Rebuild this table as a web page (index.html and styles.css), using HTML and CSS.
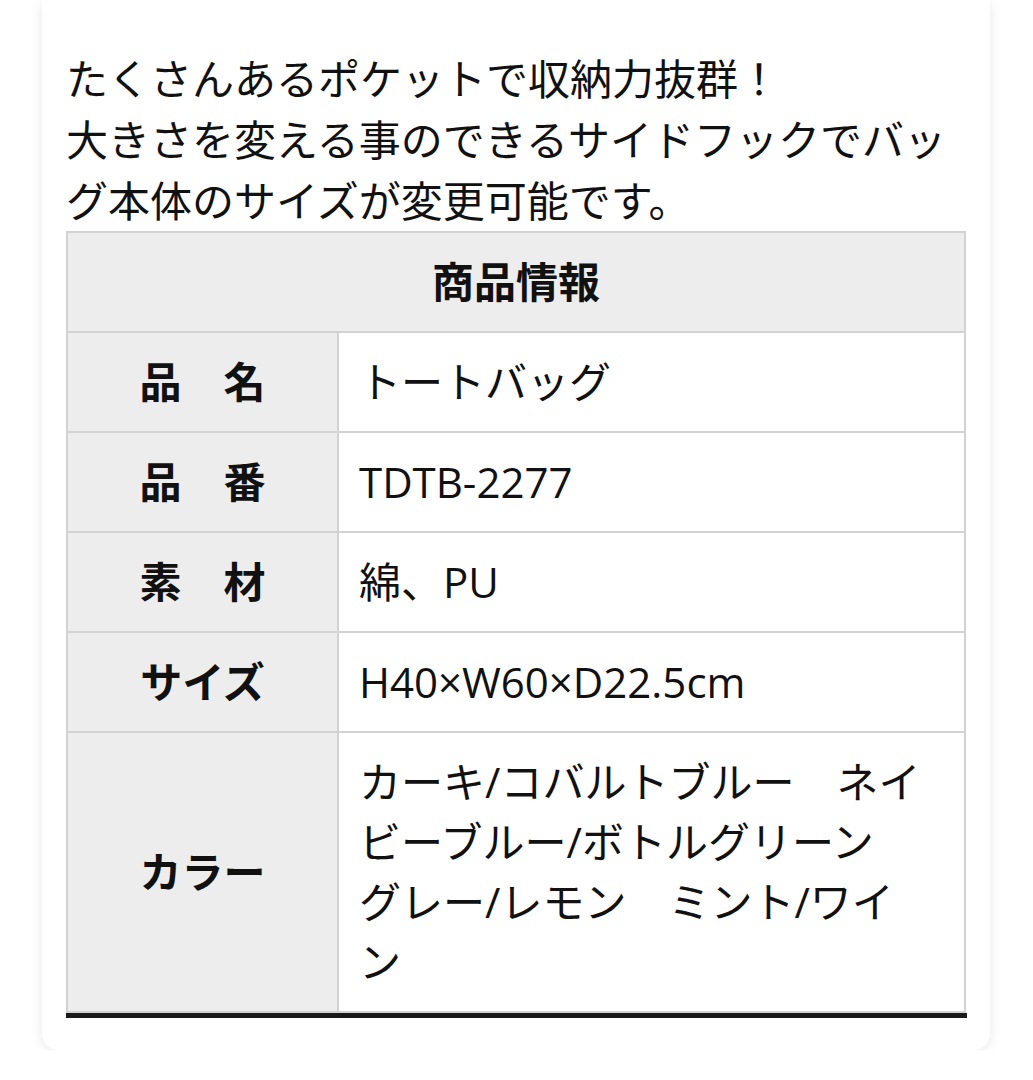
FILE: index.html
```html
<!DOCTYPE html>
<html lang="ja">
<head>
    <meta charset="UTF-8">
    <meta name="viewport" content="width=device-width, initial-scale=1.0">
    <title>トートバッグ 商品情報</title>
    <link rel="stylesheet" href="styles.css">
</head>
<body>
    <div class="card">
        <p class="lead">たくさんあるポケットで収納力抜群！<br>大きさを変える事のできるサイドフックでバッグ本体のサイズが変更可能です。</p>
        <table class="spec">
            <colgroup>
                <col class="col-label">
                <col class="col-value">
            </colgroup>
            <thead>
                <tr>
                    <th colspan="2">商品情報</th>
                </tr>
            </thead>
            <tbody>
                <tr>
                    <td class="label">品　名</td>
                    <td>トートバッグ</td>
                </tr>
                <tr>
                    <td class="label">品　番</td>
                    <td>TDTB-2277</td>
                </tr>
                <tr>
                    <td class="label">素　材</td>
                    <td>綿、PU</td>
                </tr>
                <tr>
                    <td class="label">サイズ</td>
                    <td>H40×W60×D22.5cm</td>
                </tr>
                <tr>
                    <td class="label">カラー</td>
                    <td>カーキ/コバルトブルー　ネイビーブルー/ボトルグリーン　グレー/レモン　ミント/ワイン</td>
                </tr>
            </tbody>
        </table>
        <div class="rule"></div>
    </div>
</body>
</html>
```

FILE: styles.css
```css
body {
    font-family: "Open Sans", "Noto Sans CJK JP", sans-serif;
    background-color: #fff;
    color: #111;
    margin: 0;
    padding: 0;
}
.card {
    width: 900px;
    margin: 0 0 0 42px;
    padding: 48px 24px 32px;
    background-color: #fff;
    border-radius: 0 0 16px 16px;
    box-shadow: 0 2px 14px rgba(0, 0, 0, 0.09);
}
.lead {
    margin: 0;
    font-size: 42px;
    line-height: 61px;
}
.spec {
    width: 100%;
    table-layout: fixed;
    border-collapse: collapse;
    border: 2px solid #d2d2d2;
    font-size: 42px;
    line-height: 60px;
}
.col-label {
    width: 271px;
}
.spec th, .spec td {
    border: 2px solid #d2d2d2;
    padding: 19px 38px 19px 20px;
    text-align: left;
    vertical-align: middle;
}
.spec th {
    background-color: #ededed;
    text-align: center;
    font-weight: bold;
    padding-right: 20px;
}
.spec .label {
    background-color: #ededed;
    text-align: center;
    font-weight: bold;
    padding-right: 20px;
}
.rule {
    width: 901px;
    height: 5px;
    background-color: #1a1a1a;
}
```
